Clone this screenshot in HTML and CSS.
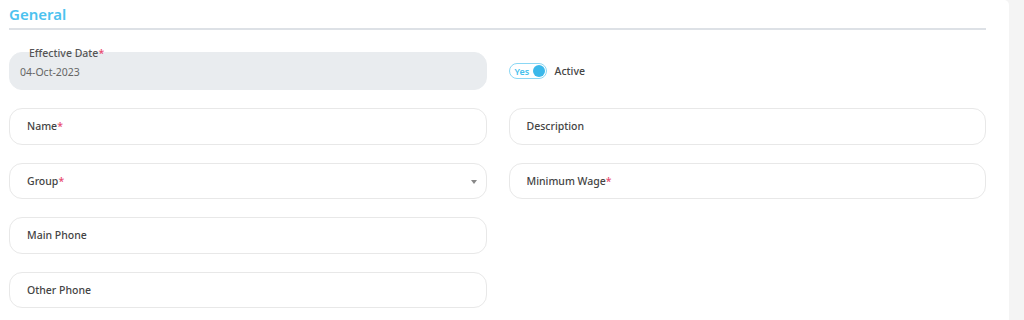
FILE: index.html
```html
<!DOCTYPE html>
<html>
<head>
<meta charset="utf-8">
<link rel="stylesheet" href="styles.css">
</head>
<body>
<div class="card">
  <div class="section-title">General</div>
  <div class="form-grid">
    <div class="field field-disabled">
      <span class="float-label">Effective Date<span class="req">*</span></span>
      <span class="value">04-Oct-2023</span>
    </div>
    <div class="toggle-row">
      <span class="toggle"><span class="toggle-text">Yes</span><span class="toggle-knob"></span></span>
      <span class="toggle-label">Active</span>
    </div>
    <div class="field"><span class="label">Name<span class="req">*</span></span></div>
    <div class="field"><span class="label">Description</span></div>
    <div class="field field-select"><span class="label">Group<span class="req">*</span></span><span class="caret"></span></div>
    <div class="field"><span class="label">Minimum Wage<span class="req">*</span></span></div>
    <div class="field left"><span class="label">Main Phone</span></div>
    <div class="field left"><span class="label">Other Phone</span></div>
  </div>
</div>
</body>
</html>
```
FILE: styles.css
```css
html, body {
  margin: 0;
  padding: 0;
  background: #f4f4f4;
  font-family: "Noto Sans", "Open Sans", sans-serif;
}
.card {
  width: 1009px;
  height: 320px;
  box-sizing: border-box;
  background: #ffffff;
  border-top-right-radius: 5px;
  padding: 0 23px 0 9px;
}
.section-title {
  color: #4cc2ef;
  font-size: 15px;
  font-weight: 600;
  line-height: 22px;
  padding-top: 3px;
  padding-bottom: 3px;
  border-bottom: 2px solid #dde1e6;
}
.form-grid {
  display: grid;
  grid-template-columns: 1fr 1fr;
  grid-template-rows: 38px;
  grid-auto-rows: 36.5px;
  column-gap: 22px;
  row-gap: 18px;
  margin-top: 22px;
}
.field {
  position: relative;
  display: flex;
  align-items: center;
  box-sizing: border-box;
  border: 1px solid #e8e8e8;
  border-radius: 13px;
  padding-left: 17px;
  padding-right: 10px;
}
.field.left {
  grid-column: 1;
}
.field-disabled {
  background: #e9ecef;
  border-color: #e9ecef;
  padding-left: 10px;
  padding-top: 2px;
}
.label {
  font-size: 10.5px;
  font-weight: 500;
  color: #444;
}
.req {
  color: #e84a6f;
}
.float-label {
  position: absolute;
  left: 19px;
  top: -7px;
  font-size: 10.5px;
  font-weight: 500;
  color: #555;
}
.value {
  font-size: 10.5px;
  color: #666;
}
.field-select {
  justify-content: space-between;
}
.caret {
  width: 0;
  height: 0;
  border-left: 3.5px solid transparent;
  border-right: 3.5px solid transparent;
  border-top: 4px solid #888;
  margin-right: -1px;
  margin-top: 2px;
}
.toggle-row {
  display: flex;
  align-items: center;
  gap: 8px;
}
.toggle {
  display: flex;
  align-items: center;
  justify-content: space-between;
  width: 38px;
  height: 16px;
  box-sizing: border-box;
  border: 1px solid #8ad7f4;
  border-radius: 8px;
  padding: 0 1px 0 5px;
}
.toggle-text {
  font-size: 9px;
  font-weight: 600;
  color: #45bfed;
}
.toggle-knob {
  width: 12px;
  height: 12px;
  border-radius: 50%;
  background: #3bb8ea;
}
.toggle-label {
  font-size: 10.5px;
  font-weight: 500;
  color: #444;
}
```
